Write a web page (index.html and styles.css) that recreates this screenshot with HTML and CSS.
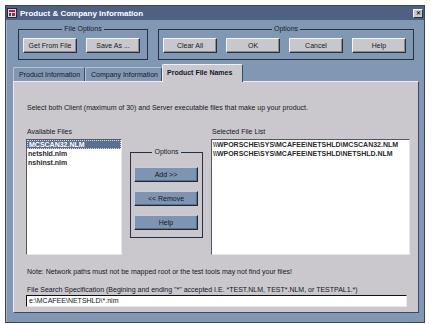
FILE: index.html
```html
<!DOCTYPE html>
<html lang="en">
<head>
    <meta charset="UTF-8">
    <title>Product &amp; Company Information</title>
    <link rel="stylesheet" href="styles.css">
</head>
<body>
    <div class="window">
        <div class="titlebar">
            <svg class="app-icon" width="10" height="10" viewBox="0 0 10 10">
                <rect x="0.5" y="0.5" width="9" height="9" fill="#d8d8e0" stroke="#20283a"/>
                <rect x="2" y="2" width="6" height="2" fill="#b8202a"/>
                <rect x="2" y="5" width="2" height="3" fill="#3a4a6a"/>
                <rect x="5" y="5" width="3" height="3" fill="#b8202a"/>
            </svg>
            <span class="title">Product &amp; Company Information</span>
            <span class="close">&#10005;</span>
        </div>

        <div class="toolbar">
            <fieldset class="group group-file">
                <legend>File Options</legend>
                <button class="btn">Get From File</button>
                <button class="btn">Save As ...</button>
            </fieldset>
            <fieldset class="group group-options">
                <legend>Options</legend>
                <button class="btn">Clear All</button>
                <button class="btn">OK</button>
                <button class="btn">Cancel</button>
                <button class="btn">Help</button>
            </fieldset>
        </div>

        <div class="tabs">
            <div class="tab tab-product">Product Information</div>
            <div class="tab tab-company">Company Information</div>
            <div class="tab tab-files active">Product File Names</div>
        </div>

        <div class="panel">
            <p class="intro">Select both Client (maximum of 30) and Server executable files that make up your product.</p>

            <div class="lists">
                <div class="col col-available">
                    <div class="label">Available Files</div>
                    <div class="listbox">
                        <div class="item selected">MCSCAN32.NLM</div>
                        <div class="item">netshld.nlm</div>
                        <div class="item">nshinst.nlm</div>
                    </div>
                </div>

                <fieldset class="group group-move">
                    <legend>Options</legend>
                    <button class="btn btn-blue">Add &gt;&gt;</button>
                    <button class="btn btn-blue">&lt;&lt; Remove</button>
                    <button class="btn btn-blue">Help</button>
                </fieldset>

                <div class="col col-selected">
                    <div class="label">Selected File List</div>
                    <div class="listbox">
                        <div class="item">\\WPORSCHE\SYS\MCAFEE\NETSHLD\MCSCAN32.NLM</div>
                        <div class="item">\\WPORSCHE\SYS\MCAFEE\NETSHLD\NETSHLD.NLM</div>
                    </div>
                </div>
            </div>

            <p class="note">Note: Network paths must not be mapped root or the test tools may not find your files!</p>
            <p class="spec">File Search Specification (Begining and ending "*" accepted I.E. *TEST.NLM, TEST*.NLM, or TESTPAL1.*)</p>
            <div class="textbox">e:\MCAFEE\NETSHLD\*.nlm</div>
        </div>
    </div>
</body>
</html>
```

FILE: styles.css
```css
body {
    margin: 0;
    background: #fff;
    font-family: 'Liberation Sans', Arial, sans-serif;
    font-size: 7px;
    line-height: 9px;
    color: #15181e;
}

.window {
    box-sizing: border-box;
    width: 420px;
    height: 318px;
    margin: 5px 0 0 5px;
    background-color: #8098b4;
    border: 1px solid #3a4558;
    box-shadow: inset 1px 1px 0 #a6b6ca;
}

/* title bar */
.titlebar {
    display: flex;
    align-items: center;
    height: 14px;
    background-color: #4d6282;
    color: #fff;
}

.app-icon {
    margin-left: 1px;
    margin-right: 3px;
}

.title {
    font-weight: bold;
    font-size: 8px;
}

.close {
    box-sizing: border-box;
    margin-left: auto;
    margin-right: 1px;
    width: 10px;
    height: 9px;
    background-color: #c9c9ce;
    border: 1px solid;
    border-color: #f2f2f2 #303030 #303030 #f2f2f2;
    color: #1a1a1a;
    font-size: 6px;
    font-weight: bold;
    line-height: 7px;
    text-align: center;
}

/* groups */
.group {
    box-sizing: border-box;
    margin: 0;
    min-width: 0;
    border: 1px solid #263042;
    display: flex;
}

.group legend {
    margin: 0 auto;
    padding: 0 2px;
    line-height: 8px;
    color: #1b2130;
}

.toolbar {
    display: flex;
    gap: 10px;
    margin: 5px 0 0 12px;
}

.group-file,
.group-options {
    gap: 9px;
    padding: 5px 4px 6px;
    height: 35px;
}

.group-file {
    width: 130px;
}

.group-options {
    width: 256px;
}

.btn {
    box-sizing: border-box;
    width: 54px;
    height: 15px;
    padding: 0;
    font-family: inherit;
    font-size: 7px;
    color: #15181e;
    background-color: #c8c8cc;
    border: 1px solid;
    border-color: #f4f4f6 #2c2f36 #2c2f36 #f4f4f6;
    box-shadow: inset -1px -1px 0 #8a8c94;
}

.btn-blue {
    width: 64px;
    background-color: #7d95b2;
    border-color: #c2cedc #1f2838 #1f2838 #c2cedc;
    box-shadow: inset -1px -1px 0 #5a6e8a;
}

/* tabs */
.tabs {
    display: flex;
    align-items: flex-end;
    height: 17px;
    margin: 4px 0 0 7px;
}

.tab {
    box-sizing: border-box;
    height: 14px;
    padding-left: 5px;
    line-height: 13px;
    border: 1px solid;
    border-bottom: none;
    border-color: #b4c3d4 #3c4a60 #3c4a60 #b4c3d4;
    border-radius: 2px 2px 0 0;
}

.tab-product {
    width: 72px;
}

.tab-company {
    width: 77px;
}

.tab-files {
    width: 81px;
}

.tab.active {
    position: relative;
    z-index: 1;
    height: 18px;
    margin-bottom: -1px;
    padding-left: 4px;
    line-height: 15px;
    font-weight: bold;
    background-color: #cac8cd;
    border-color: #f0f0f2 #3c4a60 #3c4a60 #f0f0f2;
}

/* tab panel */
.panel {
    box-sizing: border-box;
    width: 406px;
    height: 232px;
    margin-left: 7px;
    padding: 21px 8px 0 12px;
    background-color: #cac8cd;
    border: 1px solid;
    border-color: #eeeef0 #3c4a60 #3c4a60 #eeeef0;
}

.panel p {
    margin: 0;
    padding-left: 1px;
}

.lists {
    display: flex;
    gap: 8px;
    margin-top: 15px;
}

.label {
    padding-left: 1px;
    margin-bottom: 3px;
}

.col-available {
    width: 96px;
}

.col-selected {
    width: 199px;
}

.listbox {
    box-sizing: border-box;
    height: 116px;
    background-color: #fff;
    border: 1px solid;
    border-color: #55585f #e8e8ea #e8e8ea #55585f;
}

.item {
    height: 9px;
    padding-left: 1px;
    white-space: nowrap;
    font-weight: bold;
    color: #2a2a2c;
}

.item.selected {
    box-sizing: border-box;
    background-color: #5b6f8e;
    color: #fff;
    border: 1px dotted #d8dde6;
    line-height: 7px;
}

.group-move {
    width: 73px;
    height: 90px;
    margin-top: 21px;
    flex-direction: column;
    gap: 9px;
    padding: 11px 3px 7px;
    background-color: #cac8cd;
}

.note {
    margin-top: 12px !important;
}

.spec {
    margin-top: 9px !important;
}

.textbox {
    box-sizing: border-box;
    width: 381px;
    height: 12px;
    margin-top: 1px;
    padding-left: 2px;
    line-height: 10px;
    background-color: #fff;
    border: 1px solid;
    border-color: #111 #e8e8ea #e8e8ea #111;
}
```
